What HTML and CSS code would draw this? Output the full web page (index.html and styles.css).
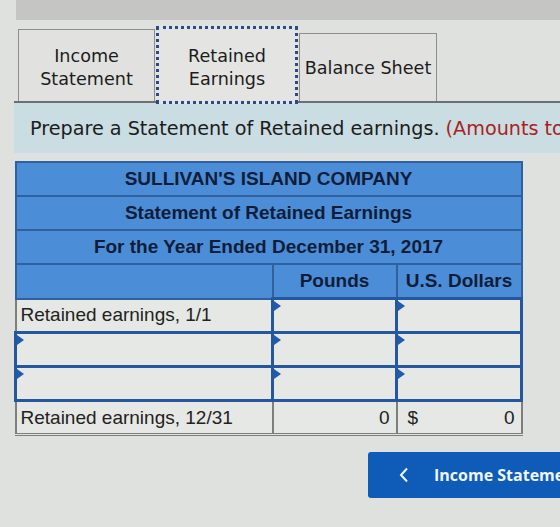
FILE: index.html
```html
<!DOCTYPE html>
<html lang="en">
<head>
<meta charset="utf-8">
<title>Statement of Retained Earnings</title>
<link rel="stylesheet" href="styles.css">
</head>
<body>
<div class="topbar"></div>
<div class="tabs">
  <div class="tab">Income<br>Statement</div>
  <div class="tab tab-active">Retained<br>Earnings</div>
  <div class="tab tab-wide">Balance Sheet</div>
</div>
<div class="prompt">
  Prepare a Statement of Retained earnings. <span class="note">(Amounts to be deducted should be indicated with a minus sign.)</span>
</div>
<table class="sheet">
  <colgroup>
    <col class="c-label"><col class="c-num"><col class="c-num2">
  </colgroup>
  <tr class="hd"><th colspan="3">SULLIVAN'S ISLAND COMPANY</th></tr>
  <tr class="hd"><th colspan="3">Statement of Retained Earnings</th></tr>
  <tr class="hd"><th colspan="3">For the Year Ended December 31, 2017</th></tr>
  <tr class="hd"><th></th><th>Pounds</th><th>U.S. Dollars</th></tr>
  <tr>
    <td class="label">Retained earnings, 1/1</td>
    <td class="input"><span class="flag"></span></td>
    <td class="input"><span class="flag"></span></td>
  </tr>
  <tr>
    <td class="input"><span class="flag"></span></td>
    <td class="input"><span class="flag"></span></td>
    <td class="input"><span class="flag"></span></td>
  </tr>
  <tr>
    <td class="input"><span class="flag"></span></td>
    <td class="input"><span class="flag"></span></td>
    <td class="input"><span class="flag"></span></td>
  </tr>
  <tr class="total">
    <td class="label">Retained earnings, 12/31</td>
    <td class="num">0</td>
    <td class="num"><span class="cur">$</span>0</td>
  </tr>
</table>
<div class="nav">
  <button class="back">
    <svg class="chev" width="10" height="16" viewBox="0 0 10 16" aria-hidden="true">
      <polyline points="8,1.5 2,8 8,14.5" fill="none" stroke="currentColor" stroke-width="2"/>
    </svg>
    <span class="back-label">Income Statement</span>
  </button>
</div>
</body>
</html>
```
FILE: styles.css
```css
html, body {
  margin: 0;
  padding: 0;
}
body {
  width: 560px;
  height: 527px;
  overflow: hidden;
  background: #dfe1de;
  font-family: "DejaVu Sans", Verdana, sans-serif;
  color: #1c1c1c;
}
.topbar {
  height: 20px;
  margin-left: 16px;
  background: #c5c6c3;
}

/* tab strip */
.tabs {
  display: flex;
  align-items: flex-end;
  margin-left: 14px;
  padding-left: 4px;
  height: 81px;
  border-bottom: 2px solid #6e706e;
}
.tab {
  box-sizing: border-box;
  width: 137px;
  height: 72px;
  padding-top: 5px;
  display: flex;
  align-items: center;
  justify-content: center;
  text-align: center;
  font-size: 17.6px;
  line-height: 23px;
  background: #e1e2df;
  border: 1px solid #8d8e8c;
  border-bottom: none;
}
.tab-active {
  width: 142px;
  height: 78px;
  margin-left: 1px;
  margin-bottom: -3px;
  padding-top: 5px;
  padding-bottom: 0;
  border: 3px dotted #2b4a86;
  background: #e4e5e2;
  position: relative;
  z-index: 1;
}
.tab-wide {
  width: 138px;
  height: 68px;
  margin-left: 1px;
  padding-top: 2px;
}

/* instruction band */
.prompt {
  margin-left: 14px;
  height: 50px;
  box-sizing: border-box;
  padding: 15px 0 0 16px;
  background: #cadde2;
  font-size: 19.2px;
  line-height: 22px;
  white-space: nowrap;
  overflow: hidden;
}
.note {
  color: #a8231f;
}

/* statement table */
.sheet {
  margin: 8px 0 0 14px;
  border-collapse: collapse;
  font-family: "Liberation Sans", Arial, sans-serif;
  width: 506px;
  table-layout: fixed;
}
.c-label { width: 257px; }
.c-num { width: 124px; }
.c-num2 { width: 125px; }
.sheet th {
  background: #4b8ed7;
  color: #0f1d3a;
  font-weight: bold;
  font-size: 19px;
  height: 32px;
  padding: 0;
  border: 2px solid #31609f;
  text-align: center;
}
.sheet td {
  height: 31px;
  padding: 0 5px 0 4px;
  background: #e6e8e5;
  border: 2px solid #7d7f7c;
  font-size: 19px;
  color: #222;
  position: relative;
}
.sheet td.input {
  border: 3px solid #24579e;
}
.flag {
  position: absolute;
  left: 0;
  top: 1px;
  width: 0;
  height: 0;
  border-top: 5px solid transparent;
  border-bottom: 5px solid transparent;
  border-left: 7px solid #1f5bb0;
}
.sheet td.num {
  text-align: right;
  padding-right: 6px;
}
.cur {
  float: left;
  margin-left: 6px;
}
.total td {
  border-bottom: 3px double #7d7f7c;
}

/* bottom navigation; the button runs on past the right edge of the pane */
.nav {
  display: flex;
  padding: 16px 0 0 368px;
  overflow: hidden;
}
.back {
  flex: none;
  display: flex;
  align-items: center;
  width: 192px;
  height: 46px;
  background: #0e5cb7;
  border: none;
  border-radius: 3px 0 0 3px;
  color: #f2f5fa;
  font-family: "Open Sans", "DejaVu Sans", sans-serif;
  font-weight: bold;
  font-size: 16px;
  padding: 0 0 0 31px;
  white-space: nowrap;
  overflow: hidden;
}
.chev {
  flex: none;
  margin-right: 25px;
}
.back-label {
  flex: none;
}
```
